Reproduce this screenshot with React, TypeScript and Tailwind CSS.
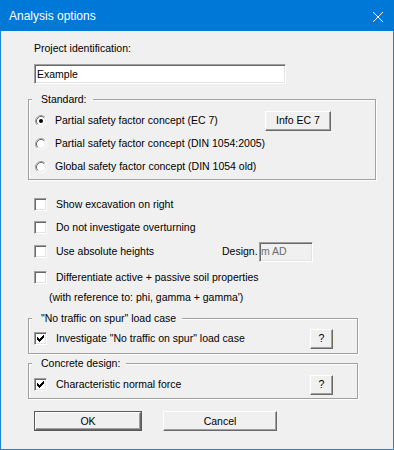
import React from "react";

function Sunken({ className = "", children }: { className?: string; children?: React.ReactNode }) {
  return (
    <div
      className={`border border-t-[#a0a0a0] border-l-[#a0a0a0] border-r-white border-b-white shadow-[inset_1px_1px_0_#696969,inset_-1px_-1px_0_#e3e3e3] ${className}`}
    >
      {children}
    </div>
  );
}

function Check({ checked = false }: { checked?: boolean }) {
  const px: [number, number, number][] = [
    [6, 0, 1],
    [5, 1, 2],
    [0, 2, 1],
    [4, 2, 3],
    [0, 3, 2],
    [3, 3, 3],
    [0, 4, 5],
    [1, 5, 3],
    [2, 6, 1],
  ];
  return (
    <Sunken className="w-[13px] h-[13px] bg-white shrink-0 flex items-center justify-center">
      {checked && (
        <svg width="7" height="7" viewBox="0 0 7 7" shapeRendering="crispEdges">
          {px.map(([x, y, w], i) => (
            <rect key={i} x={x} y={y} width={w} height={1} fill="#000" />
          ))}
        </svg>
      )}
    </Sunken>
  );
}

function Radio({ checked = false }: { checked?: boolean }) {
  return (
    <svg width="12" height="12" viewBox="0 0 12 12" className="shrink-0">
      <circle cx="6" cy="6" r="5" fill="#fff" />
      <path d="M2.11 9.89 A5.5 5.5 0 0 1 9.89 2.11" stroke="#a0a0a0" fill="none" />
      <path d="M9.89 2.11 A5.5 5.5 0 0 1 2.11 9.89" stroke="#ffffff" fill="none" />
      <path d="M2.82 9.18 A4.5 4.5 0 0 1 9.18 2.82" stroke="#696969" fill="none" />
      <path d="M9.18 2.82 A4.5 4.5 0 0 1 2.82 9.18" stroke="#e3e3e3" fill="none" />
      {checked && <circle cx="6" cy="6" r="2" fill="#000" />}
    </svg>
  );
}

function Btn({ className = "", def = false, children }: { className?: string; def?: boolean; children?: React.ReactNode }) {
  const face = (
    <div className="w-full h-full flex items-center justify-center bg-[#f0f0f0] border border-t-white border-l-white border-r-[#696969] border-b-[#696969] shadow-[inset_-1px_-1px_0_#a0a0a0]">
      {children}
    </div>
  );
  if (def) {
    return <div className={`border border-[#5a5a5a] shrink-0 ${className}`}>{face}</div>;
  }
  return <div className={`shrink-0 ${className}`}>{face}</div>;
}

function Group({ label, className = "", children }: { label: string; className?: string; children?: React.ReactNode }) {
  return (
    <fieldset className={`border border-[#a0a0a0] shadow-[inset_1px_1px_0_#fff,1px_1px_0_#fff] ${className}`}>
      <legend className="ml-[3px] pl-[9px] pr-[6px] h-[13px] leading-[13px] bg-[#f0f0f0]">{label}</legend>
      {children}
    </fieldset>
  );
}

export default function App() {
  return (
    <div className="w-[394px] h-[450px] flex flex-col bg-[#f0f0f0] font-['Liberation_Sans',Arial,sans-serif] text-black">
      <div className="h-[31px] shrink-0 bg-[#0078d7] flex items-start justify-between pl-[9px] pr-[11px] text-white text-[12px] leading-[15px]">
        <div className="pt-[9px]">Analysis options</div>
        <svg width="10" height="10" viewBox="0 0 10 10" className="mt-[12px]">
          <path d="M0 0 L10 10 M10 0 L0 10" stroke="#fff" strokeWidth="1" />
        </svg>
      </div>
      <div className="flex-1 flex flex-col items-start pl-[27px] border-x border-b border-[#1883d7] text-[10.5px] leading-[13px]">
        <div className="mt-[11px] ml-[6px] h-[13px]">Project identification:</div>
        <Sunken className="mt-[9px] ml-[6px] w-[252px] h-[20px] bg-white flex items-center pl-[2px]">Example</Sunken>

        <Group label="Standard:" className="mt-[9px] w-[348px] pt-[3px] pb-[1px]">
          <div className="flex items-center h-[23px] pl-[6px]">
            <Radio checked />
            <span className="ml-[8px] w-[210px]">Partial safety factor concept (EC 7)</span>
            <Btn className="w-[66px] h-[20px]">Info EC 7</Btn>
          </div>
          <div className="flex items-center h-[23px] pl-[6px]">
            <Radio />
            <span className="ml-[8px]">Partial safety factor concept (DIN 1054:2005)</span>
          </div>
          <div className="flex items-center h-[23px] pl-[6px]">
            <Radio />
            <span className="ml-[8px]">Global safety factor concept (DIN 1054 old)</span>
          </div>
        </Group>

        <div className="mt-[13px] flex items-center h-[23px] pl-[6px]">
          <Check />
          <span className="ml-[9px]">Show excavation on right</span>
        </div>
        <div className="flex items-center h-[23px] pl-[6px]">
          <Check />
          <span className="ml-[9px]">Do not investigate overturning</span>
        </div>
        <div className="mt-[1px] flex items-center h-[23px] pl-[6px]">
          <Check />
          <span className="ml-[9px] w-[166px]">Use absolute heights</span>
          <span className="w-[37px]">Design.</span>
          <Sunken className="w-[54px] h-[20px] bg-[#f0f0f0] flex items-center pl-[1px] text-[#6d6d6d]">m AD</Sunken>
        </div>
        <div className="mt-[3px] flex items-center h-[23px] pl-[6px]">
          <Check />
          <span className="ml-[9px]">Differentiate active + passive soil properties</span>
        </div>
        <div className="mt-[2px] ml-[21px] h-[13px]">(with reference to: phi, gamma + gamma')</div>

        <Group label={'"No traffic on spur" load case'} className="mt-[8px] w-[330px] pt-[2px] pb-[3px]">
          <div className="flex items-center h-[23px] pl-[5px]">
            <Check checked />
            <span className="ml-[9px] w-[254px]">Investigate "No traffic on spur" load case</span>
            <Btn className="w-[23px] h-[20px]">?</Btn>
          </div>
        </Group>

        <Group label="Concrete design:" className="mt-[3px] w-[330px] pt-[3px] pb-[2px]">
          <div className="flex items-center h-[23px] pl-[5px]">
            <Check checked />
            <span className="ml-[9px] w-[254px]">Characteristic normal force</span>
            <Btn className="w-[23px] h-[20px]">?</Btn>
          </div>
        </Group>

        <div className="mt-[12px] ml-[6px] flex">
          <Btn def className="w-[108px] h-[20px]">OK</Btn>
          <Btn className="ml-[21px] w-[114px] h-[20px]">Cancel</Btn>
        </div>
      </div>
    </div>
  );
}
